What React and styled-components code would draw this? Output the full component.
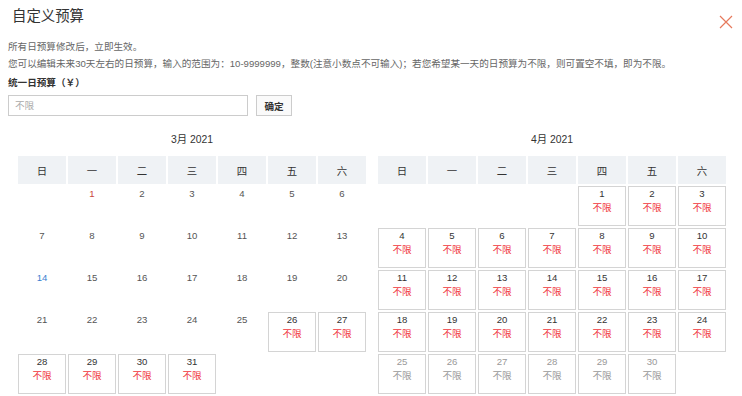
import React from "react";
import styled, { createGlobalStyle } from "styled-components";

const GlobalStyle = createGlobalStyle`
  body {
    margin: 0;
    background: #fff;
    font-family: "Liberation Sans", "Noto Sans CJK SC", sans-serif;
    color: #333;
  }
`;

const Dialog = styled.div`
  width: 742px;
  height: 396px;
  box-sizing: border-box;
  padding: 6px 9px 0 8px;
  overflow: hidden;
`;

const TitleBar = styled.div`
  display: flex;
  justify-content: space-between;
  align-items: flex-start;
  padding-left: 4px;
`;

const Title = styled.h1`
  margin: 0;
  font-size: 14.4px;
  line-height: 20px;
  font-weight: normal;
  color: #333;
`;

const Close = styled.button`
  border: 0;
  background: none;
  padding: 0;
  margin-top: 9px;
  width: 14px;
  height: 14px;
  cursor: pointer;
  display: flex;
`;

const Tip = styled.p`
  margin: 0;
  font-size: 9.6px;
  line-height: 17px;
  color: #666;
  white-space: nowrap;
  &:first-of-type {
    margin-top: 8.5px;
  }
`;

const Label = styled.div`
  margin-top: 2px;
  font-size: 9.6px;
  line-height: 17px;
  font-weight: bold;
  color: #333;
`;

const FormRow = styled.div`
  display: flex;
  gap: 8px;
  margin-top: 4.5px;
`;

const Input = styled.input`
  width: 240px;
  height: 21px;
  box-sizing: border-box;
  border: 1px solid #ccc;
  padding: 0 6px;
  font-size: 9.6px;
  font-family: inherit;
  outline: none;
  &::placeholder {
    color: #aaa;
  }
`;

const Button = styled.button`
  width: 36px;
  height: 21px;
  box-sizing: border-box;
  border: 1px solid #ccc;
  background: #fafafa;
  font-size: 9.6px;
  font-family: inherit;
  font-weight: bold;
  color: #333;
  padding: 0;
`;

const Calendars = styled.div`
  display: flex;
  gap: 12px;
  margin-top: 16px;
  padding-left: 10px;
`;

const Month = styled.div`
  display: flex;
  flex-direction: column;
`;

const MonthTitle = styled.div`
  text-align: center;
  font-size: 10.4px;
  line-height: 16px;
  color: #333;
  margin-bottom: 8px;
`;

const Grid = styled.div`
  display: grid;
  grid-template-columns: repeat(7, 48px);
  grid-template-rows: 28px;
  grid-auto-rows: 40px;
  gap: 2px;
`;

const WeekCell = styled.div`
  background: #eff2f5;
  display: flex;
  align-items: center;
  justify-content: center;
  font-size: 10.4px;
  color: #333;
`;

const DayCell = styled.div`
  box-sizing: border-box;
  border: 1px solid ${(p) => (p.$boxed ? "#d4d4d4" : "transparent")};
  padding-top: 1px;
  display: flex;
  flex-direction: column;
  align-items: center;
  background: #fff;
`;

const DayNum = styled.span`
  font-size: 9.6px;
  line-height: 12px;
  color: ${(p) => p.$color || "#333"};
`;

const Budget = styled.span`
  font-size: 9.6px;
  line-height: 15px;
  color: ${(p) => (p.$muted ? "#999" : "#f0353a")};
`;

const WEEK = ["日", "一", "二", "三", "四", "五", "六"];

function Calendar({ title, offset, days, dayProps }) {
  const blanks = Array.from({ length: offset });
  const list = Array.from({ length: days }, (_, i) => i + 1);
  return (
    <Month>
      <MonthTitle>{title}</MonthTitle>
      <Grid>
        {WEEK.map((w) => (
          <WeekCell key={w}>{w}</WeekCell>
        ))}
        {blanks.map((_, i) => (
          <div key={"b" + i} />
        ))}
        {list.map((d) => {
          const info = dayProps(d);
          return (
            <DayCell key={d} $boxed={info.boxed}>
              <DayNum $color={info.color}>{d}</DayNum>
              {info.boxed && <Budget $muted={info.muted}>不限</Budget>}
            </DayCell>
          );
        })}
      </Grid>
    </Month>
  );
}

const marchProps = (d) => {
  if (d >= 26) return { boxed: true };
  if (d === 1) return { color: "#c9463d" };
  if (d === 14) return { color: "#3b7fd0" };
  return { color: "#555" };
};

const aprilProps = (d) => {
  if (d >= 25) return { boxed: true, muted: true, color: "#999" };
  return { boxed: true };
};

export default function App() {
  return (
    <>
      <GlobalStyle />
      <Dialog>
        <TitleBar>
          <Title>自定义预算</Title>
          <Close aria-label="关闭">
            <svg width="14" height="14" viewBox="0 0 14 14">
              <path
                d="M1 1 L13 13 M13 1 L1 13"
                stroke="#e6795c"
                strokeWidth="1.2"
                fill="none"
              />
            </svg>
          </Close>
        </TitleBar>
        <Tip>所有日预算修改后，立即生效。</Tip>
        <Tip>
          您可以编辑未来30天左右的日预算，输入的范围为：10-9999999，整数(注意小数点不可输入)；若您希望某一天的日预算为不限，则可置空不填，即为不限。
        </Tip>
        <Label>统一日预算（￥）</Label>
        <FormRow>
          <Input placeholder="不限" />
          <Button>确定</Button>
        </FormRow>
        <Calendars>
          <Calendar title="3月 2021" offset={1} days={31} dayProps={marchProps} />
          <Calendar title="4月 2021" offset={4} days={30} dayProps={aprilProps} />
        </Calendars>
      </Dialog>
    </>
  );
}
